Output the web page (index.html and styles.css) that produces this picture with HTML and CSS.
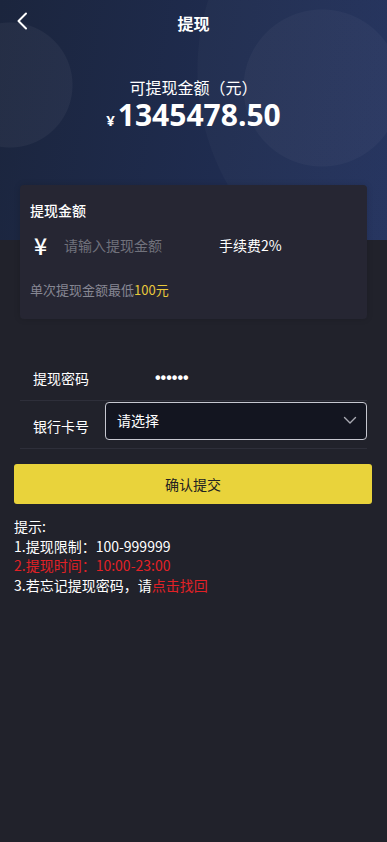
FILE: index.html
```html
<!DOCTYPE html>
<html lang="zh">
<head>
<meta charset="utf-8">
<meta name="viewport" content="width=device-width, initial-scale=1">
<title>提现</title>
<link rel="stylesheet" href="styles.css">
</head>
<body>
<div class="hero">
  <div class="nav">
    <span class="back">
      <svg width="12" height="18" viewBox="0 0 12 18"><path d="M10 1.5 L2.5 9 L10 16.5" fill="none" stroke="#ffffff" stroke-width="2" stroke-linecap="round" stroke-linejoin="round"/></svg>
    </span>
    <span class="title">提现</span>
  </div>
  <div class="balance-label">可提现金额（元）</div>
  <div class="balance"><span class="yen">¥</span><span class="num">1345478.50</span></div>
</div>

<div class="card">
  <div class="card-title">提现金额</div>
  <div class="amount-row">
    <span class="big-yen">¥</span>
    <span class="placeholder">请输入提现金额</span>
    <span class="fee">手续费2%</span>
  </div>
  <div class="hint">单次提现金额最低<span class="gold">100元</span></div>
</div>

<div class="form">
  <div class="row pwd-row">
    <span class="label">提现密码</span>
    <span class="dots">••••••</span>
  </div>
  <div class="row bank-row">
    <span class="label bank-label">银行卡号</span>
    <div class="select">
      <span>请选择</span>
      <svg width="14" height="9" viewBox="0 0 14 9"><path d="M1.5 1.5 L7 7 L12.5 1.5" fill="none" stroke="#a9aab3" stroke-width="1.4" stroke-linecap="round" stroke-linejoin="round"/></svg>
    </div>
  </div>
</div>

<div class="submit">确认提交</div>

<div class="tips">
  <div>提示:</div>
  <div>1.提现限制：100-999999</div>
  <div class="red">2.提现时间：10:00-23:00</div>
  <div>3.若忘记提现密码，请<span class="red">点击找回</span></div>
</div>
</body>
</html>
```

FILE: styles.css
```css
* { box-sizing: border-box; }
html, body {
  margin: 0;
  padding: 0;
}
body {
  background: #21222b;
  color: #ffffff;
  font-family: "Noto Sans CJK SC", "Noto Sans", sans-serif;
  min-height: 842px;
}

.hero {
  height: 240px;
  background:
    radial-gradient(circle at 10px 85px, rgba(255,255,255,0.045) 62px, rgba(255,255,255,0) 63px),
    radial-gradient(circle at 322px 88px, rgba(255,255,255,0.03) 78px, rgba(255,255,255,0) 79px),
    radial-gradient(circle at 430px 70px, rgba(255,255,255,0.022) 232px, rgba(255,255,255,0) 233px),
    linear-gradient(100deg, #1b253d 0%, #22315d 100%);
  text-align: center;
}

.nav {
  height: 48px;
  display: flex;
  align-items: center;
  justify-content: center;
  position: relative;
}
.back {
  position: absolute;
  left: 16px;
  top: 12px;
  display: flex;
}
.title {
  font-size: 16px;
  font-weight: 700;
  margin-top: -2px;
}

.balance-label {
  margin-top: 29px;
  font-size: 16px;
  line-height: 20px;
}
.balance {
  margin-top: 1px;
  display: flex;
  justify-content: center;
  align-items: baseline;
  line-height: 34px;
  height: 34px;
}
.yen {
  font-family: "Open Sans", sans-serif;
  font-weight: 700;
  font-size: 15px;
  margin-right: 3px;
}
.num {
  font-family: "Open Sans", sans-serif;
  font-weight: 700;
  font-size: 30px;
}

.card {
  margin: -55px 20px 0;
  background: #262633;
  border-radius: 4px;
  padding: 15px 10px 19px;
  box-shadow: 0 0 6px rgba(0,0,0,0.15);
}
.card-title {
  font-size: 14px;
  line-height: 20px;
  font-weight: 500;
}
.amount-row {
  margin-top: 10px;
  height: 30px;
  display: flex;
  align-items: center;
}
.big-yen {
  font-size: 23px;
  width: 24px;
  margin-left: 4px;
  font-weight: 500;
}
.placeholder {
  margin-left: 6px;
  font-size: 14px;
  color: #71727c;
  width: 155px;
}
.fee {
  font-size: 14px;
}
.hint {
  margin-top: 20px;
  font-size: 13px;
  line-height: 20px;
  color: #868793;
}
.gold { color: #e9c93c; }

.form {
  margin: 36px 20px 0;
}
.row {
  display: flex;
  border-bottom: 1px solid #2e2f3a;
}
.pwd-row {
  height: 46px;
  align-items: center;
}
.label {
  font-size: 14px;
  padding-left: 13px;
  width: 85px;
  flex-shrink: 0;
}
.dots {
  margin-left: 50px;
  font-size: 16px;
  font-weight: 700;
  font-family: "Liberation Sans", sans-serif;
}
.bank-row {
  height: 48px;
  align-items: flex-start;
  padding-top: 1px;
}
.bank-label {
  padding-top: 14px;
  line-height: 20px;
}
.select {
  flex: 1;
  height: 38px;
  border: 1px solid #c6c7d0;
  border-radius: 4px;
  background: #131520;
  display: flex;
  align-items: center;
  justify-content: space-between;
  padding: 0 9px 2px 11px;
  font-size: 14px;
}

.submit {
  margin: 15px 15px 0 14px;
  height: 40px;
  border-radius: 3px;
  background: #e9d33b;
  color: #222222;
  font-size: 14px;
  display: flex;
  align-items: center;
  justify-content: center;
}

.tips {
  margin: 13px 14px 0;
  font-size: 14px;
  line-height: 19.5px;
}
.red { color: #e22126; }
```
